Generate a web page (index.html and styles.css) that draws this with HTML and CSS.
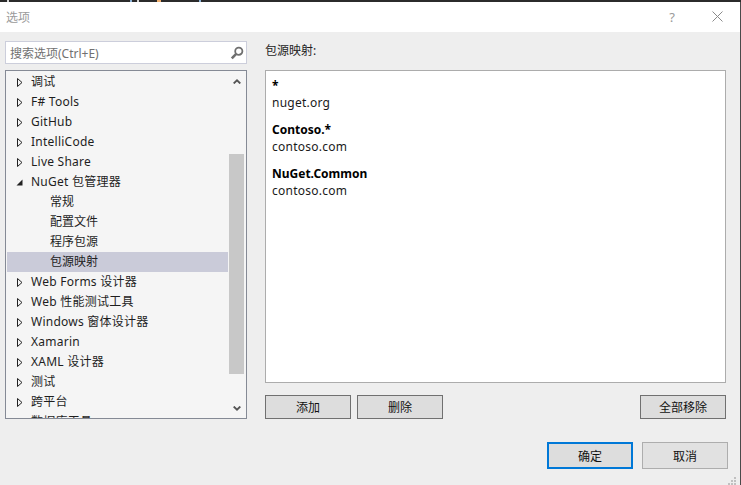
FILE: index.html
```html
<!DOCTYPE html>
<html lang="zh-CN">
<head>
<meta charset="utf-8">
<title>选项</title>
<link rel="stylesheet" href="styles.css">
</head>
<body>
<div class="topstrip"></div>
<div class="dialog">
  <header class="titlebar">
    <span class="title">选项</span>
    <div class="winbtns">
      <span class="help">?</span>
      <svg class="close" width="11" height="11" viewBox="0 0 11 11"><path d="M0.5 0.5L10.5 10.5M10.5 0.5L0.5 10.5" stroke="#8a8a8a" stroke-width="1" fill="none"/></svg>
    </div>
  </header>
  <main class="content">
    <section class="left">
      <div class="search">
        <span class="search-text">搜索选项(Ctrl+E)</span>
        <svg class="search-icon" width="14" height="14" viewBox="0 0 14 14"><circle cx="8.8" cy="5.2" r="3.6" fill="none" stroke="#6f6f6f" stroke-width="1.8"/><path d="M6.2 7.9L1.8 12.3" stroke="#6f6f6f" stroke-width="2.6" fill="none"/></svg>
      </div>
      <div class="tree">
        <ul class="rows">
          <li class="row"><svg class="arrow" viewBox="0 0 6 9"><path d="M0.5 0.5L5 4.5L0.5 8.5Z" fill="none" stroke="#222"/></svg><span>调试</span></li>
          <li class="row"><svg class="arrow" viewBox="0 0 6 9"><path d="M0.5 0.5L5 4.5L0.5 8.5Z" fill="none" stroke="#222"/></svg><span>F# Tools</span></li>
          <li class="row"><svg class="arrow" viewBox="0 0 6 9"><path d="M0.5 0.5L5 4.5L0.5 8.5Z" fill="none" stroke="#222"/></svg><span>GitHub</span></li>
          <li class="row"><svg class="arrow" viewBox="0 0 6 9"><path d="M0.5 0.5L5 4.5L0.5 8.5Z" fill="none" stroke="#222"/></svg><span>IntelliCode</span></li>
          <li class="row"><svg class="arrow" viewBox="0 0 6 9"><path d="M0.5 0.5L5 4.5L0.5 8.5Z" fill="none" stroke="#222"/></svg><span>Live Share</span></li>
          <li class="row"><svg class="arrow open" viewBox="0 0 7 7"><path d="M0.5 6.5L6.5 0.5V6.5Z" fill="#222"/></svg><span>NuGet 包管理器</span></li>
          <li class="row child">常规</li>
          <li class="row child">配置文件</li>
          <li class="row child">程序包源</li>
          <li class="row child selected">包源映射</li>
          <li class="row"><svg class="arrow" viewBox="0 0 6 9"><path d="M0.5 0.5L5 4.5L0.5 8.5Z" fill="none" stroke="#222"/></svg><span>Web Forms 设计器</span></li>
          <li class="row"><svg class="arrow" viewBox="0 0 6 9"><path d="M0.5 0.5L5 4.5L0.5 8.5Z" fill="none" stroke="#222"/></svg><span>Web 性能测试工具</span></li>
          <li class="row"><svg class="arrow" viewBox="0 0 6 9"><path d="M0.5 0.5L5 4.5L0.5 8.5Z" fill="none" stroke="#222"/></svg><span>Windows 窗体设计器</span></li>
          <li class="row"><svg class="arrow" viewBox="0 0 6 9"><path d="M0.5 0.5L5 4.5L0.5 8.5Z" fill="none" stroke="#222"/></svg><span>Xamarin</span></li>
          <li class="row"><svg class="arrow" viewBox="0 0 6 9"><path d="M0.5 0.5L5 4.5L0.5 8.5Z" fill="none" stroke="#222"/></svg><span>XAML 设计器</span></li>
          <li class="row"><svg class="arrow" viewBox="0 0 6 9"><path d="M0.5 0.5L5 4.5L0.5 8.5Z" fill="none" stroke="#222"/></svg><span>测试</span></li>
          <li class="row"><svg class="arrow" viewBox="0 0 6 9"><path d="M0.5 0.5L5 4.5L0.5 8.5Z" fill="none" stroke="#222"/></svg><span>跨平台</span></li>
          <li class="row"><svg class="arrow" viewBox="0 0 6 9"><path d="M0.5 0.5L5 4.5L0.5 8.5Z" fill="none" stroke="#222"/></svg><span>数据库工具</span></li>
        </ul>
        <div class="scrollbar">
          <svg class="sb-arrow" width="8" height="5" viewBox="0 0 8 5"><path d="M0.7 4.5L4 1.3L7.3 4.5" fill="none" stroke="#555" stroke-width="1.8"/></svg>
          <div class="thumb"></div>
          <svg class="sb-arrow bottom" width="8" height="5" viewBox="0 0 8 5"><path d="M0.7 0.5L4 3.7L7.3 0.5" fill="none" stroke="#555" stroke-width="1.8"/></svg>
        </div>
      </div>
    </section>
    <section class="right">
      <label class="heading">包源映射:</label>
      <div class="listbox">
        <div class="entry"><div class="name">*</div><div class="source">nuget.org</div></div>
        <div class="entry"><div class="name">Contoso.*</div><div class="source">contoso.com</div></div>
        <div class="entry"><div class="name">NuGet.Common</div><div class="source">contoso.com</div></div>
      </div>
      <div class="actions">
        <button class="btn">添加</button>
        <button class="btn">删除</button>
        <button class="btn push">全部移除</button>
      </div>
    </section>
  </main>
  <footer class="footer">
    <button class="btn wide primary">确定</button>
    <button class="btn wide muted">取消</button>
    <svg class="grip" width="8" height="8" viewBox="0 0 8 8"><path d="M6 0h2v2H6zM3 3h2v2H3zM6 3h2v2H6zM0 6h2v2H0zM3 6h2v2H3zM6 6h2v2H6z" fill="#c0c0c0"/></svg>
  </footer>
</div>
</body>
</html>
```
FILE: styles.css
```css
* { box-sizing: border-box; }
html, body { margin: 0; padding: 0; }
body {
  width: 741px;
  height: 485px;
  overflow: hidden;
  background: #eeeeee;
  font-family: "Noto Sans", "Noto Sans CJK SC", sans-serif;
  font-size: 12px;
  color: #1e1e1e;
}
.topstrip {
  height: 2px;
  background-color: #2b2b2b;
  background-image:
    linear-gradient(#d8d8d8, #d8d8d8),
    linear-gradient(#8fb4d8, #8fb4d8),
    linear-gradient(#d8d8d8, #d8d8d8),
    linear-gradient(#f0b070, #f0b070),
    linear-gradient(#8fb4d8, #8fb4d8);
  background-repeat: no-repeat;
  background-size: 2px 2px, 2px 2px, 2px 2px, 4px 2px, 2px 2px;
  background-position: 7px 0, 130px 0, 137px 0, 157px 0, 199px 0;
}
.dialog {
  height: 483px;
  display: flex;
  flex-direction: column;
  border-right: 1px solid #4a4a4a;
}
.titlebar {
  height: 30px;
  flex: none;
  background: #fff;
  display: flex;
  align-items: center;
  justify-content: space-between;
  padding: 0 17px 0 6px;
}
.title { font-size: 12px; color: #9a9a9a; }
.winbtns { display: flex; align-items: center; gap: 37px; }
.help { font-size: 13px; color: #9a9a9a; }
.close { display: block; margin-top: -2px; }
.content {
  flex: 1;
  display: flex;
  padding: 9px 14px 0 5px;
  gap: 18px;
  min-height: 0;
}
.left { width: 242px; flex: none; display: flex; flex-direction: column; gap: 6px; }
.search {
  height: 23px;
  flex: none;
  background: #fff;
  border: 1px solid #cccedb;
  display: flex;
  align-items: center;
  justify-content: space-between;
  padding: 0 2px 0 4px;
}
.search-text { color: #717171; }
.search-icon { display: block; }
.tree {
  height: 349px;
  flex: none;
  display: flex;
  background: #f5f5f5;
  border: 1px solid #858a95;
  padding-left: 1px;
  overflow: hidden;
}
.rows { list-style: none; margin: 0; padding: 1px 0 0; flex: 1; min-width: 0; }
.row {
  height: 20px;
  display: flex;
  align-items: center;
  padding-left: 10px;
  white-space: nowrap;
  line-height: 20px;
  letter-spacing: 0.25px;
}
.row.child { padding-left: 43px; letter-spacing: 0; }
.row.selected { background: #cacbd9; }
.arrow { width: 6px; height: 9px; flex: none; margin-right: 8px; }
.arrow.open { width: 7px; height: 7px; margin-left: -1px; margin-right: 8px; }
.scrollbar {
  width: 15px;
  flex: none;
  margin-right: 2px;
  margin-left: 1px;
  display: flex;
  flex-direction: column;
  align-items: center;
}
.sb-arrow { display: block; margin-top: 8px; flex: none; }
.sb-arrow.bottom { margin-top: 32px; }
.thumb { width: 15px; height: 220px; background: #c8c8c8; margin-top: 70px; flex: none; }
.right { flex: 1; display: flex; flex-direction: column; min-width: 0; }
.heading { height: 29px; line-height: 20px; flex: none; }
.listbox {
  height: 313px;
  flex: none;
  background: #fff;
  border: 1px solid #acacac;
  padding: 6px 6px;
  color: #1a1a1a;
  letter-spacing: 0.25px;
}
.entry { margin-bottom: 10px; }
.name { font-weight: 700; line-height: 17px; color: #000; letter-spacing: 0; }
.source { line-height: 17px; }
.actions { display: flex; gap: 6px; margin-top: 12px; }
.btn {
  width: 86px;
  height: 24px;
  padding: 0;
  font: inherit;
  color: #111;
  background: #dddddd;
  border: 1px solid #707070;
}
.push { margin-left: auto; }
.footer {
  position: relative;
  display: flex;
  justify-content: flex-end;
  gap: 9px;
  padding: 0 12px 16px 0;
  flex: none;
}
.wide { width: 86px; height: 27px; }
.primary { border: 2px solid #0078d7; }
.muted { border: 1px solid #adadad; background: #e1e1e1; }
.grip { position: absolute; right: 4px; bottom: 0; }
```
